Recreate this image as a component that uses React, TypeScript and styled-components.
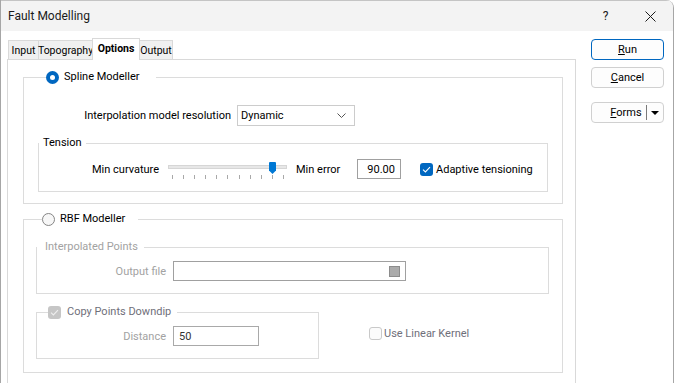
import React from "react";
import styled, { createGlobalStyle } from "styled-components";

const FONT = `Roboto, "Liberation Sans", sans-serif`;

const Global = createGlobalStyle`
  html, body { margin: 0; padding: 0; background: #fff; }
  body { font-family: ${FONT}; font-size: 11px; color: #000; }
  * { box-sizing: border-box; }
`;

const Window = styled.div`
  width: 674px;
  height: 383px;
  overflow: hidden;
  background: #fff;
  border-left: 1px solid #a6a6a6;
  border-right: 1px solid #a6a6a6;
  border-top-right-radius: 8px;
  display: flex;
  flex-direction: column;
`;

const TitleBar = styled.div`
  height: 31px;
  flex: none;
  background: #f3f3f3;
  border-top: 1px solid #c4c4c4;
  display: flex;
  align-items: center;
  padding-left: 7px;
`;

const Title = styled.span`
  flex: 1;
  font-size: 12px;
  color: #1a1a1a;
`;

const CaptionButton = styled.span`
  width: 45px;
  height: 30px;
  display: flex;
  align-items: center;
  justify-content: center;
  font-size: 12px;
  color: #1a1a1a;
`;

const Body = styled.div`
  display: flex;
  padding-top: 7px;
`;

const Main = styled.div`
  width: 569px;
  margin-left: 6px;
  display: flex;
  flex-direction: column;
`;

const TabRow = styled.div`
  display: flex;
  align-items: flex-end;
  height: 21px;
  padding-left: 1px;
  position: relative;
  z-index: 1;
`;

const Tab = styled.div<{ $w: number; $active?: boolean }>`
  width: ${(p) => p.$w}px;
  height: ${(p) => (p.$active ? 22 : 19)}px;
  margin-bottom: ${(p) => (p.$active ? -1 : 0)}px;
  margin-right: -1px;
  border: 1px solid #d9d9d9;
  border-bottom: none;
  background: ${(p) => (p.$active ? "#fff" : "#f0f0f0")};
  font-weight: ${(p) => (p.$active ? 700 : 400)};
  font-size: 10.5px;
  display: flex;
  align-items: center;
  justify-content: center;
  padding-bottom: ${(p) => (p.$active ? 2 : 0)}px;
  white-space: nowrap;
  color: #000;
  position: relative;
  z-index: ${(p) => (p.$active ? 2 : 1)};
`;

const Panel = styled.div`
  height: 340px;
  border: 1px solid #d9d9d9;
  padding: 9px 12px 0 15px;
  display: flex;
  flex-direction: column;
`;

const Group = styled.fieldset<{ $pad: string; $mt?: number; $w?: number }>`
  margin: ${(p) => p.$mt ?? 0}px 0 0 0;
  padding: ${(p) => p.$pad};
  border: 1px solid #dcdcdc;
  min-width: 0;
  ${(p) => (p.$w ? `width: ${p.$w}px; flex: none;` : "")}
`;

const Legend = styled.legend<{ $ml: number; $pl: number; $pr: number; $gap?: number }>`
  margin-left: ${(p) => p.$ml}px;
  padding: 0 ${(p) => p.$pr}px 0 ${(p) => p.$pl}px;
  height: 16px;
  line-height: 16px;
  display: flex;
  align-items: center;
  gap: ${(p) => p.$gap ?? 0}px;
`;

const Text = styled.span<{ $tone?: "normal" | "disabled" | "muted" }>`
  white-space: nowrap;
  color: ${(p) =>
    p.$tone === "disabled" ? "#a2a2a2" : p.$tone === "muted" ? "#6f6f7a" : "#000"};
`;

const FieldGrid = styled.div<{ $label: number; $gap: number; $mt: number }>`
  display: grid;
  grid-template-columns: ${(p) => p.$label}px auto;
  column-gap: ${(p) => p.$gap}px;
  align-items: center;
  justify-items: start;
  margin-top: ${(p) => p.$mt}px;
`;

const FieldLabel = styled.span<{ $disabled?: boolean }>`
  justify-self: end;
  white-space: nowrap;
  color: ${(p) => (p.$disabled ? "#a2a2a2" : "#000")};
`;

const Select = styled.div`
  width: 118px;
  height: 21px;
  border: 1px solid #cccccc;
  background: #fff;
  display: flex;
  align-items: center;
  justify-content: space-between;
  padding: 0 8px 0 3px;
`;

const TextBox = styled.div<{ $w: number; $align?: "left" | "right"; $dim?: boolean }>`
  width: ${(p) => p.$w}px;
  height: 20px;
  border: 1px solid ${(p) => (p.$dim ? "#a9a9a9" : "#a0a0a0")};
  background: #fff;
  display: flex;
  align-items: center;
  justify-content: ${(p) => (p.$align === "right" ? "flex-end" : "flex-start")};
  padding: 0 5px 0 5px;
  color: ${(p) => (p.$dim ? "#333" : "#000")};
`;

const BrowseSquare = styled.span`
  width: 11px;
  height: 11px;
  background: #ababab;
  border: 1px solid #8c8c8c;
  margin-left: auto;
`;

const TensionRow = styled.div`
  display: flex;
  align-items: center;
  height: 20px;
  padding-left: 53px;
`;

const RowLabel = styled.span<{ $w: number; $pl?: number }>`
  width: ${(p) => p.$w}px;
  padding-left: ${(p) => p.$pl ?? 0}px;
  white-space: nowrap;
  flex: none;
`;

const SliderBox = styled.div`
  position: relative;
  width: 119px;
  height: 20px;
  flex: none;
  display: flex;
  flex-direction: column;
`;

const Track = styled.div`
  margin-top: 6px;
  height: 4px;
  background: #e7e7e7;
  border: 1px solid #d6d6d6;
`;

const Ticks = styled.div`
  margin-top: 6px;
  height: 4px;
  display: flex;
  justify-content: space-between;
  padding: 0 3px 0 4px;
`;

const Tick = styled.span`
  width: 1px;
  height: 4px;
  background: #a9a9a9;
`;

const Thumb = styled.svg`
  position: absolute;
  left: 101px;
  top: 3px;
`;

const CheckItem = styled.div<{ $ml?: number; $mt?: number; $gap: number }>`
  display: flex;
  align-items: center;
  gap: ${(p) => p.$gap}px;
  margin-left: ${(p) => p.$ml ?? 0}px;
  margin-top: ${(p) => p.$mt ?? 0}px;
  height: 16px;
`;

const CheckBox = styled.span<{ $checked?: boolean; $disabled?: boolean }>`
  width: 13px;
  height: 13px;
  flex: none;
  border-radius: 3px;
  display: flex;
  align-items: center;
  justify-content: center;
  background: ${(p) =>
    p.$checked ? (p.$disabled ? "#c6c6c6" : "#0067c0") : "#fbfbfb"};
  border: ${(p) => (p.$checked ? "none" : "1px solid #c9c9c9")};
`;

const RadioDot = styled.span<{ $checked?: boolean }>`
  width: 13px;
  height: 13px;
  flex: none;
  border-radius: 50%;
  display: flex;
  align-items: center;
  justify-content: center;
  background: ${(p) => (p.$checked ? "#0067c0" : "#f7f7f7")};
  border: ${(p) => (p.$checked ? "none" : "1px solid #858585")};
  &::after {
    content: "";
    display: ${(p) => (p.$checked ? "block" : "none")};
    width: 5px;
    height: 5px;
    border-radius: 50%;
    background: #fff;
  }
`;

const BottomRow = styled.div`
  display: flex;
  align-items: flex-start;
  margin-top: 10px;
`;

const Side = styled.div`
  width: 73px;
  margin-left: 15px;
  padding-top: 1px;
  display: flex;
  flex-direction: column;
`;

const Button = styled.div<{ $primary?: boolean; $mt?: number }>`
  width: 73px;
  height: 21px;
  margin-top: ${(p) => p.$mt ?? 0}px;
  border: 1px solid ${(p) => (p.$primary ? "#0067c0" : "#d0d0d0")};
  border-radius: 4px;
  background: #fdfdfd;
  display: flex;
  align-items: center;
  justify-content: center;
  color: #000;
`;

const Key = styled.span`
  text-decoration: underline;
  text-underline-offset: 1px;
`;

const SplitLabel = styled.span`
  flex: 1;
  text-align: center;
  padding-left: 14px;
`;

const SplitDivider = styled.span`
  width: 1px;
  height: 15px;
  background: #7a7a7a;
`;

const SplitArrow = styled.span`
  width: 16px;
  display: flex;
  justify-content: center;
  align-items: center;
`;

const Tick11 = () => (
  <Ticks>
    {Array.from({ length: 11 }).map((_, i) => (
      <Tick key={i} />
    ))}
  </Ticks>
);

const CheckMark = ({ color }: { color: string }) => (
  <svg width="9" height="7" viewBox="0 0 9 7">
    <path d="M1 3.6 L3.4 6 L8 1.2" fill="none" stroke={color} strokeWidth="1.1" />
  </svg>
);

export default function App() {
  return (
    <>
      <Global />
      <Window>
        <TitleBar>
          <Title>Fault Modelling</Title>
          <CaptionButton>?</CaptionButton>
          <CaptionButton>
            <svg width="11" height="11" viewBox="0 0 11 11">
              <path d="M0.5 0.5 L10.5 10.5 M10.5 0.5 L0.5 10.5" stroke="#1a1a1a" strokeWidth="1" />
            </svg>
          </CaptionButton>
        </TitleBar>
        <Body>
          <Main>
            <TabRow>
              <Tab $w={31}>Input</Tab>
              <Tab $w={55}>Topography</Tab>
              <Tab $w={48} $active>Options</Tab>
              <Tab $w={34}>Output</Tab>
            </TabRow>
            <Panel>
              <Group $pad="0 14px 11px 14px">
                <Legend $ml={8} $pl={0} $pr={16} $gap={5}>
                  <RadioDot $checked />
                  <Text>Spline Modeller</Text>
                </Legend>
                <FieldGrid $label={193} $gap={6} $mt={20}>
                  <FieldLabel>Interpolation model resolution</FieldLabel>
                  <Select>
                    <span>Dynamic</span>
                    <svg width="9" height="5" viewBox="0 0 9 5">
                      <path d="M0.5 0.5 L4.5 4.5 L8.5 0.5" fill="none" stroke="#555" strokeWidth="1" />
                    </svg>
                  </Select>
                </FieldGrid>
                <Group $pad="8px 0 12px 0" $mt={9}>
                  <Legend $ml={0} $pl={4} $pr={4}>
                    <Text>Tension</Text>
                  </Legend>
                  <TensionRow>
                    <RowLabel $w={76}>Min curvature</RowLabel>
                    <SliderBox>
                      <Track />
                      <Tick11 />
                      <Thumb width="7" height="12" viewBox="0 0 7 12">
                        <path d="M0 1 Q0 0 1 0 H6 Q7 0 7 1 V8.5 L3.5 12 L0 8.5 Z" fill="#0078d4" />
                      </Thumb>
                    </SliderBox>
                    <RowLabel $w={70} $pl={9}>Min error</RowLabel>
                    <TextBox $w={44} $align="right">90.00</TextBox>
                    <CheckItem $ml={19} $gap={3}>
                      <CheckBox $checked>
                        <CheckMark color="#fff" />
                      </CheckBox>
                      <Text>Adaptive tensioning</Text>
                    </CheckItem>
                  </TensionRow>
                </Group>
              </Group>

              <Group $pad="12px 13px 13px 12px" $mt={7}>
                <Legend $ml={6} $pl={0} $pr={13} $gap={5}>
                  <RadioDot />
                  <Text>RBF Modeller</Text>
                </Legend>
                <Group $pad="0 0 12px 0">
                  <Legend $ml={0} $pl={8} $pr={6}>
                    <Text $tone="disabled">Interpolated Points</Text>
                  </Legend>
                  <FieldGrid $label={129} $gap={7} $mt={6}>
                    <FieldLabel $disabled>Output file</FieldLabel>
                    <TextBox $w={233}>
                      <BrowseSquare />
                    </TextBox>
                  </FieldGrid>
                </Group>
                <BottomRow>
                  <Group $pad="0 0 12px 0" $w={283}>
                    <Legend $ml={11} $pl={0} $pr={6} $gap={6}>
                      <CheckBox $checked $disabled>
                        <CheckMark color="#eeeeee" />
                      </CheckBox>
                      <Text $tone="muted">Copy Points Downdip</Text>
                    </Legend>
                    <FieldGrid $label={129} $gap={7} $mt={6}>
                      <FieldLabel $disabled>Distance</FieldLabel>
                      <TextBox $w={86} $dim>50</TextBox>
                    </FieldGrid>
                  </Group>
                  <CheckItem $ml={50} $mt={21} $gap={2}>
                    <CheckBox />
                    <Text $tone="muted">Use Linear Kernel</Text>
                  </CheckItem>
                </BottomRow>
              </Group>
            </Panel>
          </Main>
          <Side>
            <Button $primary>
              <span>
                <Key>R</Key>un
              </span>
            </Button>
            <Button $mt={7}>
              <span>
                <Key>C</Key>ancel
              </span>
            </Button>
            <Button $mt={14}>
              <SplitLabel>
                <Key>F</Key>orms
              </SplitLabel>
              <SplitDivider />
              <SplitArrow>
                <svg width="8" height="4" viewBox="0 0 8 4">
                  <path d="M0 0 H8 L4 4 Z" fill="#000" />
                </svg>
              </SplitArrow>
            </Button>
          </Side>
        </Body>
      </Window>
    </>
  );
}
